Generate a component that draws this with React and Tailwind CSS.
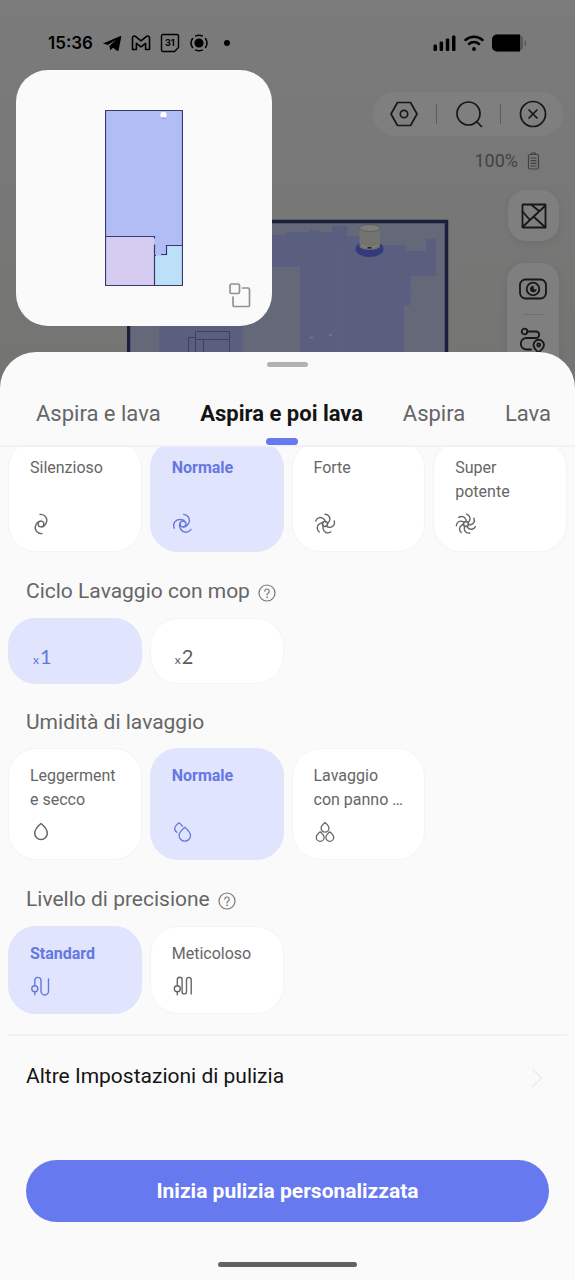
import React from "react";

const stroke = {
  fill: "none",
  stroke: "currentColor",
  strokeLinecap: "round",
  strokeLinejoin: "round",
};

function StatusBar() {
  return (
    <div className="relative flex items-center justify-between pt-8 pr-12 pb-4 pl-12 text-black">
      <div className="flex items-center gap-[9px]">
        <span className="font-[Inter,sans-serif] text-[17px] leading-[22px] font-semibold">15:36</span>
        <svg width="20" height="20" viewBox="0 0 20 20" fill="currentColor">
          <path d="M1.600 10.300 18 3.200c.8-.3 1.400.2 1.200 1.100L16.600 17c-.2.900-.8 1.100-1.600.7l-4-3-2 1.900c-.5.500-.9.300-1-.3l-.6-3.300 6.800-6.300-8.300 5.300-3.900-1.200c-.9-.2-1-.9-.4-1.500z" />
        </svg>
        <svg width="20" height="18" viewBox="0 0 20 18" {...stroke} strokeWidth="1.600">
          <path d="M1.500 15.500V3.800c0-1.600 1.700-2.300 2.900-1.400L10 6.800l5.600-4.400c1.200-.9 2.900-.2 2.900 1.400v11.700h-3.900V9.300L10 12.900 5.400 9.300v6.200z" />
        </svg>
        <svg width="20" height="20" viewBox="0 0 20 20">
          <path d="M3 1.500h14a1.500 1.500 0 0 1 1.500 1.500v11.500l-4 4H3A1.500 1.500 0 0 1 1.500 17V3A1.500 1.500 0 0 1 3 1.500z" {...stroke} strokeWidth="1.400" />
          <text x="9.800" y="13.300" textAnchor="middle" fontSize="9" fontWeight="700" fontFamily="Inter, sans-serif" fill="currentColor">31</text>
        </svg>
        <svg width="20" height="20" viewBox="0 0 20 20" {...stroke} strokeWidth="1.500">
          <circle cx="10" cy="10" r="3.800" fill="currentColor" />
          <path d="M6.700 2.900a8 8 0 0 1 6.600 0M6.700 17.100a8 8 0 0 0 6.600 0M3.500 5.500a8 8 0 0 0 0 9M16.500 5.500a8 8 0 0 1 0 9" />
        </svg>
        <span className="ml-[6px] size-[6px] rounded-full bg-black" />
      </div>
      <div className="flex items-center gap-2">
        <svg width="23" height="18" viewBox="0 0 23 18" fill="currentColor">
          <rect x="0.500" y="10.500" width="3.500" height="6.500" rx="1.200" />
          <rect x="6.600" y="7.500" width="3.500" height="9.500" rx="1.200" />
          <rect x="12.800" y="4.500" width="3.500" height="12.500" rx="1.200" />
          <rect x="19" y="1.500" width="3.500" height="15.500" rx="1.200" />
        </svg>
        <svg width="20" height="18" viewBox="0 0 20 18" {...stroke} strokeWidth="2.500">
          <path d="M1.500 6a12.500 12.500 0 0 1 17 0M5 10a7.500 7.500 0 0 1 10 0" />
          <circle cx="10" cy="15" r="1.200" fill="currentColor" strokeWidth="1.500" />
        </svg>
        <svg width="35" height="18" viewBox="0 0 35 18">
          <rect x="0" y="0.500" width="31" height="17" rx="5" fill="#5a5a5a" />
          <path d="M5 .5h23v17H5a5 5 0 0 1-5-5v-7a5 5 0 0 1 5-5z" fill="#000" />
          <path d="M32.500 6v6.500c1.500-.5 2-1.500 2-3.200s-.5-2.800-2-3.300z" fill="#606060" />
        </svg>
      </div>
    </div>
  );
}

function FloorMap() {
  return (
    <svg className="absolute top-[219px] left-[127px]" width="322" height="170" viewBox="127 219 322 170">
      <rect x="128.500" y="221" width="318" height="180" fill="#646879" />
      <path d="M200 236h72v-1h13v-3h25v-2h9v2h13v-6h15v10h13v8h23v1h22v6h21v-12h10v37h-25v29h-7v90H300V267h-28zM159 326h84v70h-84z" fill="#5a5e7f" />
      <path d="M159 236v160M243 330v60M186 326v64M272 290h28M411 290h25M404 320h41M340 245v150M376 260v130" stroke="#606480" strokeWidth="0.600" fill="none" />
      <g fill="none" stroke="#3a3d5a" strokeWidth="0.900">
        <path d="M195.500 339.500h34M195.500 331.500h34v58M195.500 331.500v58M188.500 389v-51.500h7M203.500 339.500v50" />
      </g>
      <path d="M128.500 400V221.500h318V400" fill="none" stroke="#1c1e3b" strokeWidth="3.500" />
      <ellipse cx="369.500" cy="249" rx="14" ry="8" fill="#343b7d" />
      <path d="M359.500 228v18c0 5 20.500 5 20.500 0v-18z" fill="#73736f" />
      <ellipse cx="369.700" cy="228" rx="10.300" ry="3.500" fill="#7e7e79" stroke="#55565c" strokeWidth="0.700" />
      <path d="M362 245c2 3.500 13 3.500 15 0" fill="none" stroke="#8a8a86" strokeWidth="1" />
      <path d="M367.500 247.800h4" stroke="#1e2030" strokeWidth="1.500" />
      <path d="M310 337.500h3M329 335h3" stroke="#747a9c" strokeWidth="1.500" />
    </svg>
  );
}

function MiniMap() {
  return (
    <div className="relative flex size-64 justify-center rounded-[32px] bg-[#fafafa] pt-10">
      <svg width="78" height="177" viewBox="0 0 78 177">
        <path d="M.5.500h77v175H.5z" fill="#b1bdf4" />
        <path d="M.5 126.500h49v49H.5z" fill="#d6ccf2" />
        <path d="M49.500 145.500h12v-10h16v40h-28z" fill="#bde0f9" />
        <path d="M.5.500h77v175H.5zM.5 126.500h49v2M49.500 134.500v41M49.500 145.500h1.500M56 144.500h5.500v-9h16" fill="none" stroke="#363a6b" strokeWidth="1.200" />
        <rect x="55.500" y="2" width="6" height="6" rx="2" fill="#fff" />
        <path d="M56.500 8h4" stroke="#7481bd" strokeWidth="1" />
      </svg>
      <button type="button" aria-label="Espandi mappa" className="absolute right-4 bottom-4 text-[#929292]">
        <svg className="size-[30px]" viewBox="0 0 30 30" {...stroke} strokeWidth="1.700">
          <rect x="4" y="4" width="9.500" height="9.500" rx="1.500" />
          <path d="M16.500 8H22a1.500 1.500 0 0 1 1.500 1.500v15A1.500 1.500 0 0 1 22 26.500H8.500A1.500 1.500 0 0 1 7 25v-8" />
        </svg>
      </button>
    </div>
  );
}

function Toolbar() {
  return (
    <div className="flex h-11 w-[190px] items-center justify-between rounded-full bg-[#7f7f7f] pr-4 pl-[17px] text-[#171717]">
      <button type="button" aria-label="Impostazioni">
        <svg width="28" height="28" viewBox="0 0 28 28" {...stroke} strokeWidth="1.700">
          <path d="M7.500 2.500h13L27 14l-6.500 11.500h-13L1 14z" />
          <circle cx="14" cy="14" r="3.700" />
        </svg>
      </button>
      <span className="h-5 w-px bg-[#5c5c5c]" />
      <button type="button" aria-label="Cerca">
        <svg width="28" height="28" viewBox="0 0 28 28" {...stroke} strokeWidth="1.700">
          <circle cx="13.500" cy="13.500" r="11.500" />
          <path d="m21.500 21.500 5 5" />
        </svg>
      </button>
      <span className="h-5 w-px bg-[#5c5c5c]" />
      <button type="button" aria-label="Chiudi">
        <svg width="28" height="28" viewBox="0 0 28 28" {...stroke} strokeWidth="1.700">
          <circle cx="14" cy="14" r="12.500" />
          <path d="m10 10 8 8M18 10l-8 8" />
        </svg>
      </button>
    </div>
  );
}

function SideControls() {
  return (
    <div className="flex flex-col items-end pt-[22px]">
      <Toolbar />
      <div className="flex items-center gap-2 pt-[13px] pr-[22px] text-[#424242]">
        <span className="text-[18px] leading-6">100%</span>
        <svg width="15" height="18" viewBox="0 0 15 18" {...stroke} strokeWidth="1.200">
          <rect x="2.500" y="2.500" width="10" height="14.500" rx="1.500" />
          <path d="M5.500 2V1h4v1M5 6h5M5 8.700h5M5 11.400h5M5 14h5" />
        </svg>
      </div>
      <button type="button" aria-label="Modifica mappa" className="mt-[17px] mr-1 flex size-[51px] items-center justify-center rounded-[18px] bg-[#7f7f7f] text-[#171717] shadow-[0_2px_8px_rgba(0,0,0,0.080)]">
        <svg width="26" height="26" viewBox="0 0 26 26" {...stroke} strokeWidth="1.800">
          <rect x="1.500" y="1.500" width="23" height="23" rx="0.500" />
          <path d="M24.500 2.500 1.500 24M1.500 8.500l7 8M10 1.500l8 6.500M13 14l11.500 10.500" />
        </svg>
      </button>
      <div className="mt-[22px] mr-1 flex w-[52px] flex-col items-center gap-[11px] rounded-[18px] bg-[#7f7f7f] pt-3 pb-[26px] text-[#171717] shadow-[0_2px_8px_rgba(0,0,0,0.080)]">
        <button type="button" aria-label="Telecamera">
          <svg width="28" height="28" viewBox="0 0 28 28" {...stroke} strokeWidth="1.800">
            <rect x="1" y="4.500" width="26" height="19" rx="5.500" />
            <circle cx="14" cy="14" r="6.300" />
            <path d="M14.300 14.300V11a3 3 0 1 0 3 3.300c-1 .6-2 .6-3 0z" fill="currentColor" strokeWidth="0.600" />
          </svg>
        </button>
        <span className="h-px w-5 bg-[#6e6e6e]" />
        <button type="button" aria-label="Percorso">
          <svg width="28" height="28" viewBox="0 0 28 28" {...stroke} strokeWidth="1.800">
            <circle cx="5.500" cy="5.500" r="2.800" />
            <path d="M8.500 5.500H17a3.200 3.200 0 0 1 0 6.500H7.500a5.500 5.500 0 0 0 0 11.500H12" />
            <path d="M19.500 26.500c-3.500-3-5-5.200-5-7.500a5.200 5.200 0 0 1 10.500 0c0 2.300-2 4.500-5.500 7.500z" />
            <circle cx="19.700" cy="19" r="1.500" />
          </svg>
        </button>
      </div>
    </div>
  );
}

function Swirl({ angles, arm = "M10 1.400C15 1 18 5.500 16.300 9.700c-.8 2.200-2.600 3.900-4.800 4.200", hub = 2.900, weight = 1.400 }) {
  return (
    <svg className="size-[22px]" viewBox="0 0 22 22" {...stroke} strokeWidth={weight}>
      <circle cx="11" cy="11" r={hub} />
      {angles.map((a) => (
        <path key={a} d={arm} transform={`rotate(${a} 11 11)`} />
      ))}
    </svg>
  );
}

const STRONG_ARM = "M11 1.200C15 1.500 17 5 15.300 8.300c-.6 1.200-1.300 2-2.200 2.700";
const MAX_ARM = "M11.500 1.200c3.300 1 4.300 4 3 6.600-.5 1-1 1.600-1.700 2.200";

const icons = {
  silent: <Swirl angles={[0, 180]} />,
  normal: <Swirl angles={[10, 130, 250]} />,
  strong: <Swirl angles={[0, 72, 144, 216, 288]} arm={STRONG_ARM} hub={2.600} />,
  max: <Swirl angles={[0, 51, 103, 154, 206, 257, 309]} arm={MAX_ARM} hub={2.600} />,
  drop: (
    <svg className="size-[22px]" viewBox="0 0 22 22" {...stroke} strokeWidth="1.500">
      <path d="M11 2.500c3.600 3 6.300 6.300 6.300 9.700a6.300 6.400 0 0 1-12.600 0c0-3.400 2.700-6.700 6.300-9.700z" />
    </svg>
  ),
  drops: (
    <svg className="size-[22px]" viewBox="0 0 22 22" {...stroke} strokeWidth="1.300">
      <path d="M12.800 6.300c3.500 3 5.700 5.200 5.700 8.200a5.700 5.700 0 0 1-11.400 0c0-3 2.200-5.200 5.700-8.200z" />
      <path d="M4.800 11.300C2.500 9.800 2.300 7.500 3.500 5.300 4.300 3.900 5.500 2.900 7 1.800c1.500.9 2.600 2 3.500 3.500" />
    </svg>
  ),
  threeDrops: (
    <svg className="size-[22px]" viewBox="0 0 22 22" {...stroke} strokeWidth="1.300">
      <path d="M11 1.500c2.500 2 3.900 3.800 3.900 5.800a3.900 3.900 0 0 1-7.800 0c0-2 1.400-3.800 3.900-5.800z" />
      <path d="M6.200 10.800c2.500 2 3.900 3.700 3.900 5.600a3.900 3.900 0 0 1-7.800 0c0-1.900 1.400-3.600 3.900-5.600z" />
      <path d="M15.800 10.800c2.500 2 3.900 3.700 3.900 5.600a3.900 3.900 0 0 1-7.800 0c0-1.900 1.400-3.600 3.900-5.600z" />
    </svg>
  ),
  path: (
    <svg className="size-[22px]" viewBox="0 0 22 22" {...stroke} strokeWidth="1.400">
      <circle cx="4.800" cy="13.800" r="3" />
      <path d="M4.800 16.800v3M4.800 10.800V5.500a3.100 3.100 0 0 1 6.200 0v10.700a3.500 3.500 0 0 0 7.500 0V4" />
    </svg>
  ),
  densePath: (
    <svg className="size-[22px]" viewBox="0 0 22 22" {...stroke} strokeWidth="1.400">
      <circle cx="5.300" cy="13.800" r="3" />
      <path d="M5.300 16.800v3M5.300 10.800V4.700a2.400 2.400 0 0 1 4.800 0v12a2.200 2.200 0 0 0 4.400 0v-12a2.300 2.300 0 0 1 4.700 0v14.300" />
    </svg>
  ),
};

function OptionCard({ label, icon, selected = false, height = "h-28", pad = "pb-4" }) {
  const tone = selected
    ? "border-[#e0e4fd] bg-[#e0e4fd] font-bold text-[#6577e3]"
    : "border-[#f4f4f4] bg-white text-[#666666]";
  return (
    <button
      type="button"
      aria-pressed={selected}
      className={`flex flex-col items-start justify-between rounded-[28px] border pt-[15px] pl-[21px] text-left text-[16px] leading-6 ${height} ${pad} ${tone}`}
    >
      <span className="whitespace-pre-line">{label}</span>
      {icon}
    </button>
  );
}

function CycleCard({ count, selected = false }) {
  const tone = selected
    ? "border-[#e0e4fd] bg-[#e0e4fd] text-[#6577d0]"
    : "border-[#f4f4f4] bg-white text-[#5c5c5c]";
  return (
    <button
      type="button"
      aria-pressed={selected}
      className={`flex h-[66px] items-baseline gap-px rounded-[28px] border pt-[25px] pl-6 font-[Lato,sans-serif] ${tone}`}
    >
      <span className="text-[12px] leading-6">x</span>
      <span className="text-[20px] leading-6">{count}</span>
    </button>
  );
}

function Heading({ children, help = false }) {
  return (
    <div className="flex items-center gap-2 px-[18px] pt-6 pb-3">
      <h3 className="text-[21px] leading-7 text-[#666666]">{children}</h3>
      {help && (
        <button type="button" aria-label="Informazioni" className="pt-2 pb-1 text-[#777777]">
          <svg className="size-[18px]" viewBox="0 0 18 18" {...stroke} strokeWidth="1.200">
            <circle cx="9" cy="9" r="8" />
            <path d="M6.800 7.200a2.200 2.200 0 1 1 3.500 1.800c-.9.600-1.300 1-1.300 2" />
            <circle cx="9" cy="13.200" r="0.400" fill="currentColor" strokeWidth="0.800" />
          </svg>
        </button>
      )}
    </div>
  );
}

const tabs = ["Aspira e lava", "Aspira e poi lava", "Aspira", "Lava"];

function Tabs() {
  return (
    <div role="tablist" className="flex justify-between border-b-2 border-[#f2f2f2] pr-6 pl-9">
      {tabs.map((tab, i) => (
        <button
          key={tab}
          type="button"
          role="tab"
          aria-selected={i === 1}
          className={`relative pt-[33px] pb-[17px] text-[22px] leading-7 whitespace-nowrap ${
            i === 1 ? "font-bold text-[#141414]" : "text-[#666666]"
          }`}
        >
          {tab}
          {i === 1 && (
            <span className="absolute bottom-0 left-1/2 h-[7px] w-8 -translate-x-1/2 rounded-full bg-[#6679ee]" />
          )}
        </button>
      ))}
    </div>
  );
}

export default function App() {
  return (
    <div className="flex min-h-screen flex-col bg-[#fafafa] font-[Roboto,sans-serif]">
      <header className="relative overflow-hidden bg-[#7a7a7a] bg-linear-to-b from-[#7b7b7b] to-[#747473]">
        <FloorMap />
        <StatusBar />
        <div className="relative flex items-start justify-between pr-3 pb-2 pl-4">
          <MiniMap />
          <SideControls />
        </div>
      </header>

      <main className="relative -mt-9 flex grow flex-col rounded-t-[36px] bg-[#fafafa] pt-[10px]">
        <div className="mx-auto h-[5px] w-[41px] rounded-full bg-[#b2b2b2]" />
        <Tabs />

        <div className="overflow-hidden px-2">
          <div className="-mt-[7px] grid grid-cols-4 gap-2">
            <OptionCard label="Silenzioso" icon={icons.silent} />
            <OptionCard label="Normale" icon={icons.normal} selected />
            <OptionCard label="Forte" icon={icons.strong} />
            <OptionCard label={"Super\npotente"} icon={icons.max} />
          </div>

          <Heading help>Ciclo Lavaggio con mop</Heading>
          <div className="grid grid-cols-4 gap-2">
            <CycleCard count="1" selected />
            <CycleCard count="2" />
          </div>

          <Heading>Umidità di lavaggio</Heading>
          <div className="grid grid-cols-4 gap-2">
            <OptionCard label={"Leggerment\ne secco"} icon={icons.drop} />
            <OptionCard label="Normale" icon={icons.drops} selected />
            <OptionCard label={"Lavaggio\ncon panno …"} icon={icons.threeDrops} />
          </div>

          <Heading help>Livello di precisione</Heading>
          <div className="grid grid-cols-4 gap-2">
            <OptionCard label="Standard" icon={icons.path} selected height="h-[88px]" />
            <OptionCard label="Meticoloso" icon={icons.densePath} height="h-[88px]" />
          </div>

          <a href="#altre" className="mt-5 flex items-center justify-between border-t-2 border-[#f1f1f1] pt-[26px] pr-5 pb-[26px] pl-[18px]">
            <span className="text-[21px] leading-7 text-[#141414]">Altre Impostazioni di pulizia</span>
            <svg className="mt-1 text-[#ececec]" width="20" height="20" viewBox="0 0 20 20" {...stroke} strokeWidth="1.500">
              <path d="m5.500 1.500 9 8.500-9 8.500" />
            </svg>
          </a>
        </div>

        <div className="mt-auto flex flex-col items-center px-[26px] pb-[13px]">
          <button type="button" className="h-[62px] w-full rounded-full bg-[#6679ee] text-[21px] leading-7 font-bold text-white">
            Inizia pulizia personalizzata
          </button>
          <div className="mt-10 h-[5px] w-[139px] rounded-full bg-[#626262]" />
        </div>
      </main>
    </div>
  );
}
